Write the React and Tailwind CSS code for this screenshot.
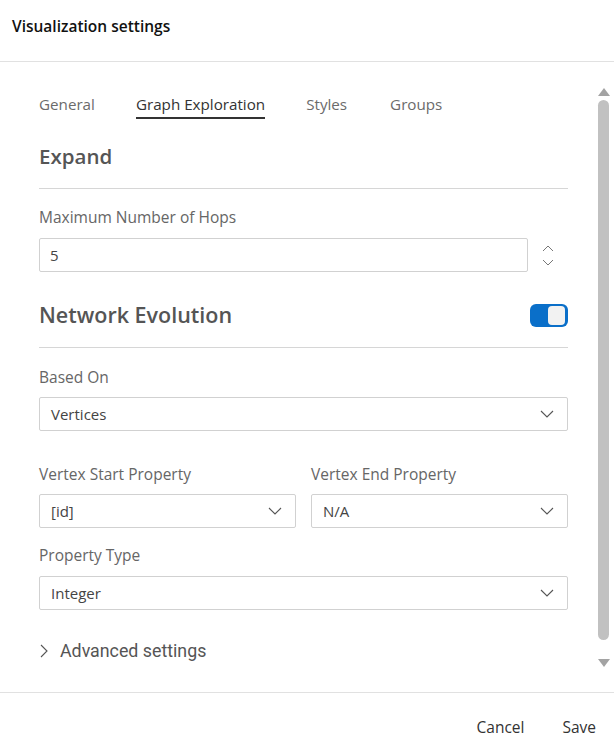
import React from "react";

const Chevron = ({ className = "" }) => (
  <svg width="14" height="8" viewBox="0 0 14 8" className={className} fill="none">
    <polyline points="1,1 7,7 13,1" stroke="#555" strokeWidth="1.1" />
  </svg>
);

const Select = ({ value, className = "" }) => (
  <div className={`h-[34px] border border-[#d1d1d1] rounded-[2px] flex items-center justify-between pl-[11px] pr-[13px] text-[15px] text-[#444] ${className}`}>
    <span>{value}</span>
    <Chevron />
  </div>
);

export default function App() {
  const font = { fontFamily: '"Open Sans", "Noto Sans", sans-serif' };
  return (
    <div className="w-[614px] h-[746px] bg-white flex flex-col overflow-hidden" style={font}>
      <div className="h-[62px] border-b border-[#e1e1e1] flex items-start pl-[12px] pt-[15px] shrink-0">
        <span className="text-[15.5px] font-semibold text-[#111] leading-[22px]">Visualization settings</span>
      </div>
      <div className="flex-1 flex min-h-0">
        <div className="flex-1 pl-[39px] pr-[27px] flex flex-col">
          <div className="mt-[32px] flex text-[15.2px] text-[#6b6b6b] leading-[20px]">
            <span className="pb-[5px]">General</span>
            <span className="ml-[41px] pb-[3px] border-b-2 border-[#333] text-[#333]">Graph Exploration</span>
            <span className="ml-[41px]">Styles</span>
            <span className="ml-[43px]">Groups</span>
          </div>
          <div className="mt-[23px] text-[20.5px] font-semibold text-[#555] leading-[28px]">Expand</div>
          <div className="mt-[18px] border-t border-[#d6d6d6]" />
          <div className="mt-[18px] text-[15.5px] text-[#666] leading-[20px]">Maximum Number of Hops</div>
          <div className="mt-[11px] flex">
            <div className="flex-1 h-[34px] border border-[#d1d1d1] rounded-[2px] flex items-center pl-[10px] pt-[1px] text-[15px] text-[#444]">5</div>
            <div className="w-[40px] flex flex-col items-center justify-center gap-[7px]">
              <svg width="12" height="7" viewBox="0 0 12 7" fill="none"><polyline points="1,6 6,1 11,6" stroke="#777" strokeWidth="1" /></svg>
              <svg width="12" height="7" viewBox="0 0 12 7" fill="none"><polyline points="1,1 6,6 11,1" stroke="#777" strokeWidth="1" /></svg>
            </div>
          </div>
          <div className="mt-[29px] flex items-center justify-between leading-[28px]">
            <span className="text-[21.5px] font-semibold text-[#555]">Network Evolution</span>
            <div className="w-[38px] h-[23px] rounded-[6px] bg-[#0a6fc9] flex items-center justify-end pr-[3px]">
              <div className="w-[17px] h-[19px] rounded-[4px] bg-[#f2f2f2]" />
            </div>
          </div>
          <div className="mt-[18px] border-t border-[#d6d6d6]" />
          <div className="mt-[19px] text-[15.5px] text-[#666] leading-[20px]">Based On</div>
          <Select value="Vertices" className="mt-[10px]" />
          <div className="mt-[33px] grid grid-cols-2 gap-x-[15px]">
            <div className="text-[15.5px] text-[#666] leading-[20px]">Vertex Start Property</div>
            <div className="text-[15.5px] text-[#666] leading-[20px]">Vertex End Property</div>
            <Select value="[id]" className="mt-[10px]" />
            <Select value="N/A" className="mt-[10px]" />
          </div>
          <div className="mt-[17px] text-[15.5px] text-[#666] leading-[20px]">Property Type</div>
          <Select value="Integer" className="mt-[11px]" />
          <div className="mt-[29px] flex items-center leading-[24px]">
            <svg width="8" height="14" viewBox="0 0 8 14" fill="none" className="ml-[1px]"><polyline points="1,1 7,7 1,13" stroke="#555" strokeWidth="1.1" /></svg>
            <span className="ml-[12px] text-[17.8px] text-[#555]" style={{ fontFamily: 'Roboto, sans-serif' }}>Advanced settings</span>
          </div>
        </div>
        <div className="w-[17px] flex flex-col items-center pt-[26px] mr-[2px]">
          <div className="w-0 h-0 border-l-[6px] border-r-[6px] border-b-[8px] border-l-transparent border-r-transparent border-b-[#a3a3a3]" />
          <div className="mt-[4px] w-[11px] h-[540px] rounded-[6px] bg-[#c1c1c1]" />
          <div className="mt-[19px] w-0 h-0 border-l-[6px] border-r-[6px] border-t-[8px] border-l-transparent border-r-transparent border-t-[#a3a3a3]" />
        </div>
      </div>
      <div className="h-[54px] border-t border-[#e1e1e1] shrink-0 flex justify-end items-start pt-[24px] pr-[18px] text-[15.5px] text-[#333] leading-[20px]">
        <span>Cancel</span>
        <span className="ml-[38px]">Save</span>
      </div>
    </div>
  );
}
